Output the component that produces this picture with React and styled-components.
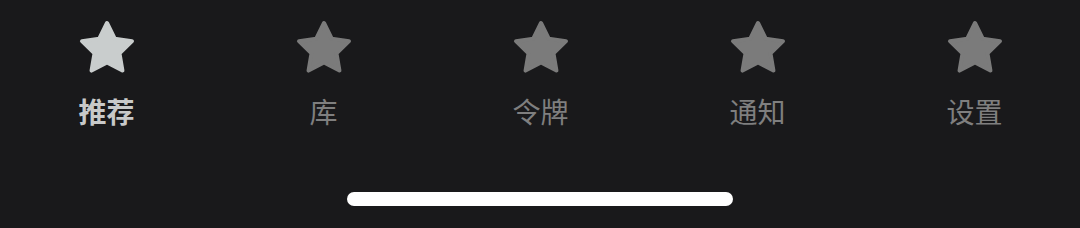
import React from 'react'
import styled, { createGlobalStyle } from 'styled-components'

const GlobalStyle = createGlobalStyle`
  html, body {
    margin: 0;
    padding: 0;
    background: #19191b;
  }
  body {
    font-family: "Noto Sans CJK SC", "Noto Sans", sans-serif;
  }
`

const tabs = [
  { label: '推荐', active: true },
  { label: '库' },
  { label: '令牌' },
  { label: '通知' },
  { label: '设置' },
]

function Star ({ color }) {
  return (
    <StarIcon viewBox='0 0 24 24' width='60' height='60'>
      <path
        d='M12 2l3.09 6.26L22 9.27l-5 4.87 1.18 6.88L12 17.77l-6.18 3.25L7 14.14 2 9.27l6.91-1.01L12 2z'
        fill={color}
        stroke={color}
        strokeWidth='1.6'
        strokeLinejoin='round'
      />
    </StarIcon>
  )
}

export default function App () {
  return (
    <>
      <GlobalStyle />
      <Screen>
        <TabBar>
          {tabs.map((tab) => (
            <Tab key={tab.label}>
              <Star color={tab.active ? '#c9cdcd' : '#7b7b7b'} />
              <Label $active={tab.active}>{tab.label}</Label>
            </Tab>
          ))}
        </TabBar>
        <HomeIndicator />
      </Screen>
    </>
  )
}

const Screen = styled.div`
  width: 1080px;
  height: 228px;
  background: #19191b;
  display: flex;
  flex-direction: column;
  align-items: center;
  overflow: hidden;
`

const TabBar = styled.div`
  width: 1085px;
  margin-left: 1px;
  display: grid;
  grid-template-columns: repeat(5, 1fr);
  padding-top: 18px;
`

const Tab = styled.div`
  display: flex;
  flex-direction: column;
  align-items: center;
`

const StarIcon = styled.svg`
  display: block;
`

const Label = styled.span`
  margin-top: 19px;
  font-size: 28px;
  line-height: 28px;
  font-weight: ${(p) => (p.$active ? 700 : 400)};
  color: ${(p) => (p.$active ? '#c8c9c9' : '#7f7f7f')};
`

const HomeIndicator = styled.div`
  margin-top: 67px;
  width: 386px;
  height: 14px;
  border-radius: 7px;
  background: #ffffff;
`
